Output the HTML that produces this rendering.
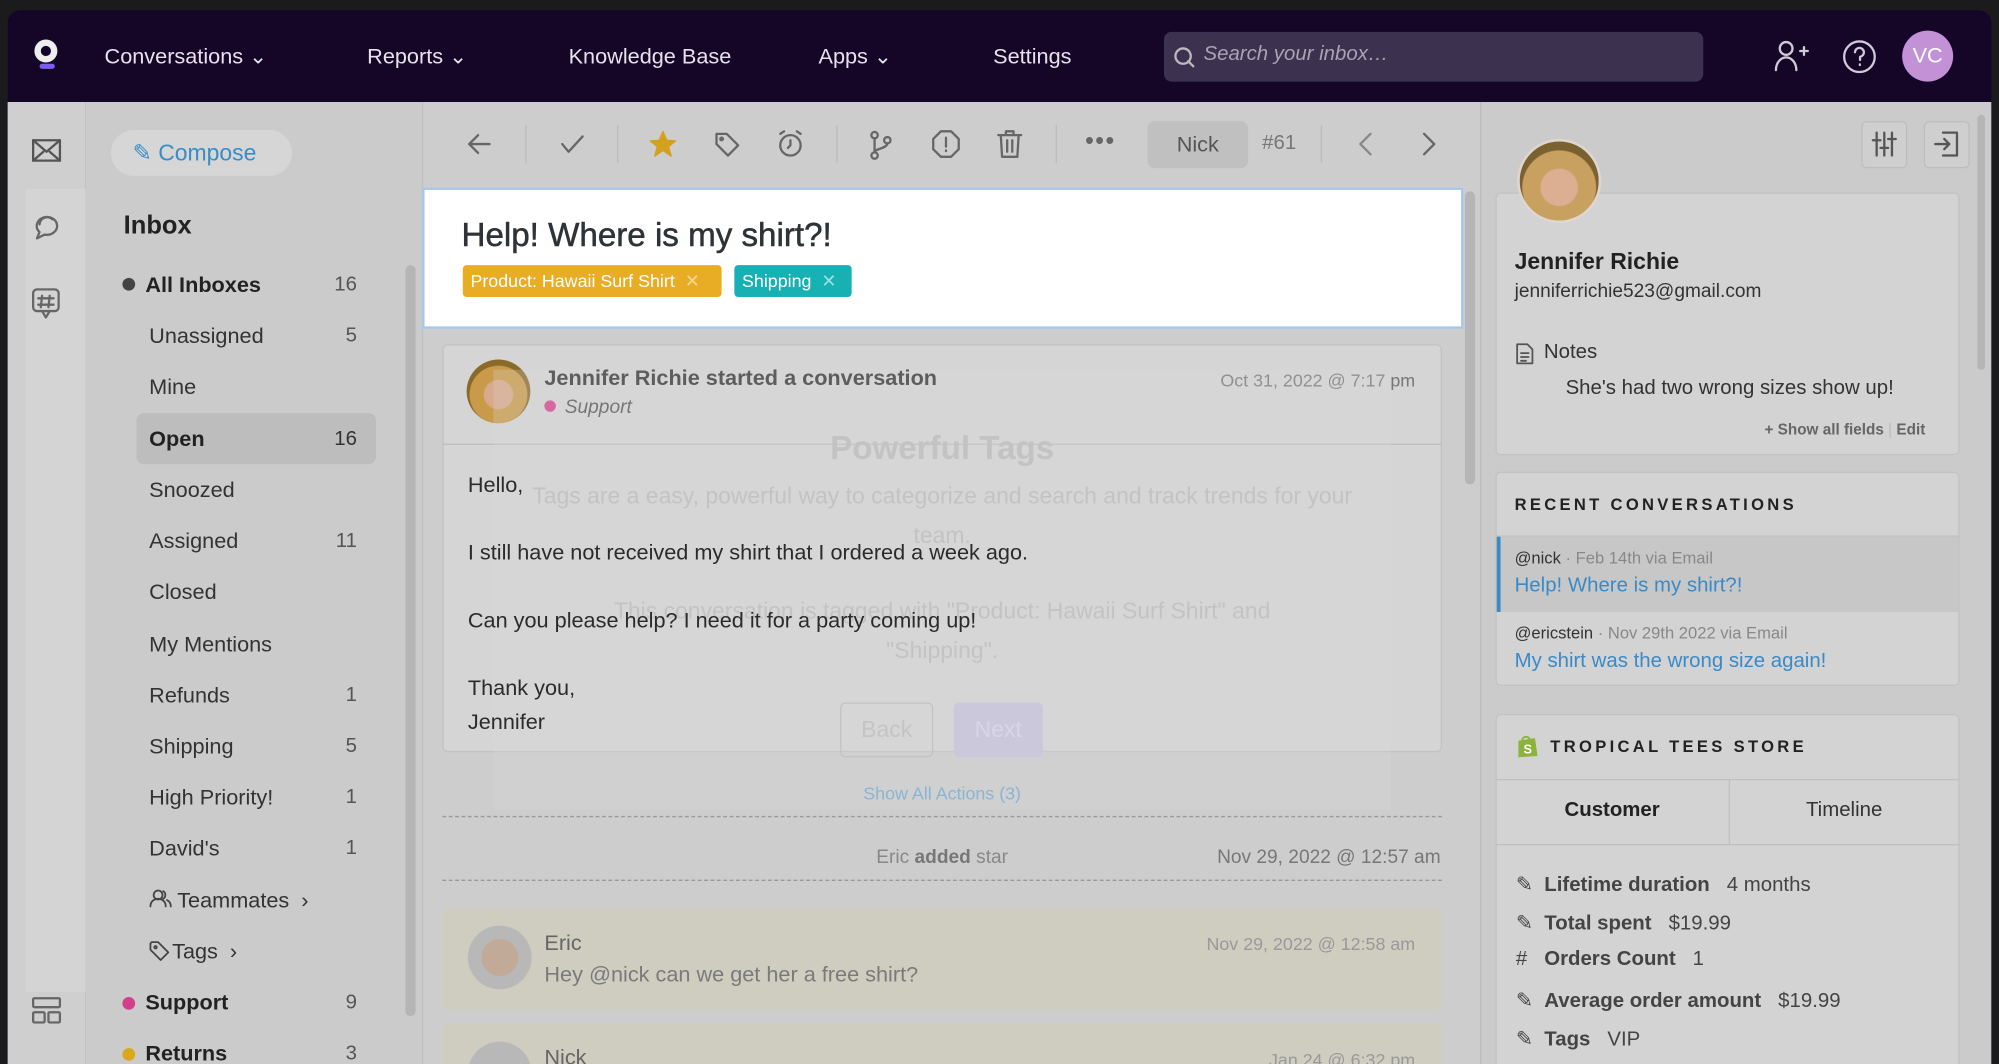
<!DOCTYPE html>
<html><head><meta charset="utf-8"><style>
*{box-sizing:border-box;margin:0;padding:0}
html,body{width:1999px;height:1064px;overflow:hidden;background:#1b1b1d;font-family:"Liberation Sans",sans-serif}
#w{position:absolute;left:0;top:0;width:1999px;height:1064px;overflow:hidden}
#s{position:absolute;left:0;top:0;width:1568px;height:835px;overflow:hidden;transform:scale(1.2749);transform-origin:0 0;background:#1b1b1d}
.a{position:absolute;white-space:nowrap}
svg.i{position:absolute;fill:none;stroke:#666;stroke-width:1.8;stroke-linecap:round;stroke-linejoin:round}
.nav{color:#e6e2ec;font-size:17px;top:35px}
.sb{font-size:17px;color:#333}
.cnt{font-size:16px;color:#555;text-align:right;width:40px;left:240px}
.card{position:absolute;background:#d3d3d3;border:1px solid #c2c2c2;border-radius:4px}
.ghost{color:#c3c3c3;text-align:center}
.rl{font-size:16px;color:#444}
</style></head><body><div id="w"><div id="s">
<!-- nav -->
<div class="a" style="left:6px;top:8px;width:1556px;height:72px;background:#150628;border-radius:10px 10px 0 0"></div>
<div class="a" style="left:27px;top:31px;width:18px;height:18px;border:5px solid #eee;border-radius:50%"></div>
<div class="a" style="left:31px;top:50px;width:12px;height:4px;background:#7b5cf0;border-radius:2px"></div>
<div class="a nav" style="left:82px">Conversations ⌄</div>
<div class="a nav" style="left:288px">Reports ⌄</div>
<div class="a nav" style="left:446px">Knowledge Base</div>
<div class="a nav" style="left:642px">Apps ⌄</div>
<div class="a nav" style="left:779px">Settings</div>
<div class="a" style="left:913px;top:25px;width:423px;height:39px;background:#3d3150;border-radius:6px"></div>
<svg class="i" style="left:920px;top:36px;stroke:#bbb" width="18" height="18"><circle cx="8" cy="8" r="6"/><path d="M12 12l4 4"/></svg>
<div class="a" style="left:944px;top:34px;font-size:16px;font-style:italic;color:#a9a3b3">Search your inbox…</div>
<svg class="i" style="left:1390px;top:30px;stroke:#cfcad8" width="30" height="28"><circle cx="11" cy="8" r="5"/><path d="M3 25c0-6 4-10 8-10s8 4 8 10M22 10h6M25 7v6"/></svg>
<svg class="i" style="left:1444px;top:30px;stroke:#cfcad8" width="29" height="29"><circle cx="14.5" cy="14.5" r="12"/><path d="M11 11a3.5 3.5 0 1 1 4 3.5v2.5M14.8 20.5v.5"/></svg>
<div class="a" style="left:1492px;top:24px;width:40px;height:40px;border-radius:50%;background:#c291d6;color:#fff;font-size:17px;text-align:center;line-height:40px">VC</div>
<!-- columns -->
<div class="a" style="left:6px;top:80px;width:61px;height:755px;background:#cfcfcf"></div>
<div class="a" style="left:20px;top:148px;width:47px;height:630px;background:#d4d4d4"></div>
<div class="a" style="left:67px;top:80px;width:264px;height:755px;background:#cbcbcb"></div>
<div class="a" style="left:331px;top:80px;width:830px;height:755px;background:#cdcdcd;border-left:1px solid #c0c0c0"></div>
<div class="a" style="left:1161px;top:80px;width:401px;height:755px;background:#cbcbcb;border-left:1px solid #c0c0c0"></div>
<div class="a" style="left:1562px;top:80px;width:6px;height:755px;background:#1b1b1d"></div>
<!-- left icons -->
<svg class="i" style="left:25px;top:108px;stroke:#555" width="24" height="20"><rect x="1" y="2" width="21" height="16"/><path d="M1 2l10.5 9L22 2M1 18l8-7M22 18l-8-7"/></svg>
<svg class="i" style="left:24px;top:166px" width="24" height="24"><path d="M7 16a8 7 0 1 1 4 2l-6 3 2-5z"/><path d="M7 10a6 6 0 0 1 10-4"/></svg>
<svg class="i" style="left:25px;top:226px" width="22" height="26"><rect x="1" y="1" width="20" height="17" rx="3"/><path d="M8 18l3 5 3-5M8 6l-1 9M14 6l-1 9M5 8h12M5 13h12"/></svg>
<svg class="i" style="left:25px;top:782px" width="23" height="21"><rect x="1" y="1" width="21" height="7" rx="1"/><rect x="1" y="12" width="9" height="8" rx="1"/><rect x="13" y="12" width="9" height="8" rx="1"/></svg>
<!-- sidebar -->
<div class="a" style="left:87px;top:102px;width:142px;height:36px;background:#d6d6d6;border-radius:18px"></div>
<div class="a" style="left:104px;top:110px;font-size:18px;color:#3a8dc4">✎ Compose</div>
<div class="a" style="left:97px;top:166px;font-size:20px;font-weight:bold;color:#222">Inbox</div>
<div class="a" style="left:107px;top:324px;width:188px;height:40px;background:#bdbdbd;border-radius:6px"></div>
<div class="a" style="left:96px;top:218px;width:10px;height:10px;border-radius:50%;background:#444"></div>
<div class="a sb" style="left:114px;top:214px;font-weight:bold;color:#222">All Inboxes</div><div class="a cnt" style="top:215px">16</div>
<div class="a sb" style="left:117px;top:254px">Unassigned</div><div class="a cnt" style="top:255px">5</div>
<div class="a sb" style="left:117px;top:294px">Mine</div>
<div class="a sb" style="left:117px;top:335px;font-weight:bold;color:#222">Open</div><div class="a cnt" style="top:336px;color:#333">16</div>
<div class="a sb" style="left:117px;top:375px">Snoozed</div>
<div class="a sb" style="left:117px;top:415px">Assigned</div><div class="a cnt" style="top:416px">11</div>
<div class="a sb" style="left:117px;top:455px">Closed</div>
<div class="a sb" style="left:117px;top:496px">My Mentions</div>
<div class="a sb" style="left:117px;top:536px">Refunds</div><div class="a cnt" style="top:537px">1</div>
<div class="a sb" style="left:117px;top:576px">Shipping</div><div class="a cnt" style="top:577px">5</div>
<div class="a sb" style="left:117px;top:616px">High Priority!</div><div class="a cnt" style="top:617px">1</div>
<div class="a sb" style="left:117px;top:656px">David's</div><div class="a cnt" style="top:657px">1</div>
<svg class="i" style="left:117px;top:697px;stroke:#444;stroke-width:1.4" width="18" height="16"><circle cx="7" cy="5" r="3.5"/><path d="M1 14c0-4 3-6 6-6s6 2 6 6M11 2a3.5 3.5 0 0 1 0 6M14 9c2 1 3 3 3 5"/></svg>
<div class="a sb" style="left:139px;top:697px">Teammates &nbsp;›</div>
<svg class="i" style="left:117px;top:738px;stroke:#444;stroke-width:1.4" width="16" height="16"><path d="M1 2v5l8 8 6-6-8-8H2z"/><circle cx="5" cy="5" r="1"/></svg>
<div class="a sb" style="left:135px;top:737px">Tags &nbsp;›</div>
<div class="a" style="left:96px;top:782px;width:10px;height:10px;border-radius:50%;background:#d33f8a"></div>
<div class="a sb" style="left:114px;top:777px;font-weight:bold;color:#222">Support</div><div class="a cnt" style="top:778px">9</div>
<div class="a" style="left:96px;top:822px;width:10px;height:10px;border-radius:50%;background:#d9a81c"></div>
<div class="a sb" style="left:114px;top:817px;font-weight:bold;color:#222">Returns</div><div class="a cnt" style="top:818px">3</div>
<div class="a" style="left:318px;top:208px;width:8px;height:589px;background:#b5b5b5;border-radius:4px"></div>
<!-- toolbar -->
<svg class="i" style="left:366px;top:103px" width="20" height="20"><path d="M18 10H2M9 3l-7 7 7 7"/></svg>
<div class="a" style="left:412px;top:98px;width:1px;height:30px;background:#bbb"></div>
<svg class="i" style="left:439px;top:104px" width="20" height="18"><path d="M2 9l5 6L18 3"/></svg>
<div class="a" style="left:484px;top:98px;width:1px;height:30px;background:#bbb"></div>
<svg class="i" style="left:509px;top:102px;fill:#d2a21e;stroke:#d2a21e;stroke-width:1" width="22" height="22"><path d="M11 1l3 7 7 .5-5.5 4.5 2 7.5L11 16l-6.5 4.5 2-7.5L1 8.5 8 8z"/></svg>
<svg class="i" style="left:560px;top:103px" width="21" height="21"><path d="M2 2h8l9 9-8 8-9-9z"/><circle cx="6" cy="6" r="1"/></svg>
<svg class="i" style="left:609px;top:101px" width="22" height="24"><circle cx="11" cy="13" r="8"/><path d="M11 9v4l-2 2M3 4l3-2M19 4l-3-2"/></svg>
<div class="a" style="left:656px;top:98px;width:1px;height:30px;background:#bbb"></div>
<svg class="i" style="left:682px;top:102px" width="18" height="24"><circle cx="4" cy="4" r="2.5"/><circle cx="4" cy="20" r="2.5"/><circle cx="14" cy="8" r="2.5"/><path d="M4 6.5v11M14 10.5c0 4-10 4-10 7"/></svg>
<svg class="i" style="left:731px;top:102px" width="22" height="22"><path d="M7 1h8l6 6v8l-6 6H7l-6-6V7z"/><path d="M11 6v7M11 16v.5"/></svg>
<svg class="i" style="left:782px;top:101px" width="20" height="24"><path d="M1 5h18M7 5V2h6v3M3 5l1 17h12l1-17M8 9v9M12 9v9"/></svg>
<div class="a" style="left:828px;top:98px;width:1px;height:30px;background:#bbb"></div>
<div class="a" style="left:851px;top:100px;font-size:20px;color:#666;letter-spacing:1px">•••</div>
<div class="a" style="left:900px;top:95px;width:79px;height:37px;background:#c0c0c0;border-radius:6px;text-align:center;line-height:37px;font-size:17px;color:#555">Nick</div>
<div class="a" style="left:990px;top:104px;font-size:16px;color:#777">#61</div>
<div class="a" style="left:1036px;top:98px;width:1px;height:30px;background:#bbb"></div>
<svg class="i" style="left:1064px;top:103px;stroke:#888" width="14" height="20"><path d="M11 2L3 10l8 8"/></svg>
<svg class="i" style="left:1114px;top:103px" width="14" height="20"><path d="M3 2l8 8-8 8"/></svg>
<!-- header card -->
<div class="a" style="left:331px;top:147px;width:817px;height:111px;background:#fff;border:2px solid #a9c6ea"></div>
<div class="a" style="left:362px;top:169px;font-size:26px;color:#2e3338;-webkit-text-stroke:0.4px #2e3338">Help! Where is my shirt?!</div>
<div class="a" style="left:363px;top:208px;width:203px;height:25px;background:#e8ad24;border-radius:3px;color:#fff;font-size:14px;line-height:25px;padding-left:6px">Product: Hawaii Surf Shirt <span style="color:#f6d88c">&nbsp;✕</span></div>
<div class="a" style="left:576px;top:208px;width:92px;height:25px;background:#17b0b3;border-radius:3px;color:#fff;font-size:14px;line-height:25px;padding-left:6px">Shipping <span style="color:#9de0e0">&nbsp;✕</span></div>
<div class="a" style="left:1149px;top:150px;width:8px;height:230px;background:#b5b5b5;border-radius:4px"></div>
<!-- message -->
<div class="card" style="left:347px;top:270px;width:784px;height:320px;background:#d5d5d5"></div>
<div class="a" style="left:347px;top:348px;width:784px;height:1px;background:#bdbdbd"></div>
<div class="a" style="left:366px;top:282px;width:50px;height:50px;border-radius:50%;background:radial-gradient(circle at 50% 55%,#d9a98b 0 30%,#c99a4a 32% 60%,#8a6a2a 62%)"></div>
<div class="a" style="left:427px;top:287px;font-size:17px;font-weight:bold;color:#333">Jennifer Richie started a conversation</div>
<div class="a" style="left:427px;top:314px;width:9px;height:9px;border-radius:50%;background:#d6418c"></div>
<div class="a" style="left:443px;top:311px;font-size:15px;font-style:italic;color:#555">Support</div>
<div class="a" style="left:900px;top:290px;width:210px;text-align:right;font-size:14px;color:#777">Oct 31, 2022 @ 7:17 pm</div>
<div class="a" style="left:387px;top:290px;width:704px;height:345px;background:rgba(220,220,220,.25)"></div>
<div class="a ghost" style="left:387px;top:336px;width:704px;font-size:26px;font-weight:bold">Powerful Tags</div>
<div class="a ghost" style="left:387px;top:374px;width:704px;font-size:18px;line-height:31px;white-space:normal;padding:0 20px">Tags are a easy, powerful way to categorize and search and track trends for your team.</div>
<div class="a ghost" style="left:387px;top:464px;width:704px;font-size:18px;line-height:31px;white-space:normal;padding:0 50px">This conversation is tagged with "Product: Hawaii Surf Shirt" and "Shipping".</div>
<div class="a" style="left:659px;top:551px;width:73px;height:43px;border:1px solid #c2c2c2;border-radius:4px;color:#c4c4c4;font-size:18px;text-align:center;line-height:41px">Back</div>
<div class="a" style="left:748px;top:551px;width:70px;height:43px;background:#cbc8dc;border-radius:4px;color:#d8d6e6;font-size:18px;text-align:center;line-height:43px">Next</div>
<div class="a" style="left:367px;top:368px;font-size:17px;color:#2b2b2b;line-height:26.5px">Hello,<br><br>I still have not received my shirt that I ordered a week ago.<br><br>Can you please help? I need it for a party coming up!<br><br>Thank you,<br>Jennifer</div>
<div class="a" style="left:347px;top:614px;width:784px;text-align:center;font-size:14px;color:#8ab4d4">Show All Actions (3)</div>
<div class="a" style="left:347px;top:640px;width:784px;border-top:1px dashed #999"></div>
<div class="a" style="left:347px;top:664px;width:784px;text-align:center;font-size:15px;color:#888">Eric <b style="color:#777">added</b> star</div>
<div class="a" style="left:900px;top:664px;width:230px;text-align:right;font-size:15px;color:#777">Nov 29, 2022 @ 12:57 am</div>
<div class="a" style="left:347px;top:690px;width:784px;border-top:1px dashed #999"></div>
<div class="a" style="left:347px;top:712px;width:784px;height:80px;background:#cfcdc0;border-radius:4px"></div>
<div class="a" style="left:367px;top:726px;width:50px;height:50px;border-radius:50%;background:radial-gradient(circle at 50% 50%,#c2aa98 0 40%,#b8b8b8 42%)"></div>
<div class="a" style="left:427px;top:730px;font-size:17px;color:#666">Eric</div>
<div class="a" style="left:427px;top:755px;font-size:17px;color:#7a7a7a">Hey @nick can we get her a free shirt?</div>
<div class="a" style="left:900px;top:732px;width:210px;text-align:right;font-size:14px;color:#999">Nov 29, 2022 @ 12:58 am</div>
<div class="a" style="left:347px;top:803px;width:784px;height:40px;background:#cfcdc0;border-radius:4px"></div>
<div class="a" style="left:367px;top:817px;width:50px;height:50px;border-radius:50%;background:#b8b8b8"></div>
<div class="a" style="left:427px;top:820px;font-size:17px;color:#666">Nick</div>
<div class="a" style="left:900px;top:823px;width:210px;text-align:right;font-size:14px;color:#999">Jan 24 @ 6:32 pm</div>
<!-- right panel -->
<div class="a" style="left:1460px;top:95px;width:36px;height:37px;border:1px solid #bdbdbd;border-radius:4px;background:#cfcfcf"></div>
<svg class="i" style="left:1467px;top:102px;stroke:#555" width="22" height="22"><path d="M5 2v18M11 2v18M17 2v18M2 8h6M8 14h6M14 7h6"/></svg>
<div class="a" style="left:1509px;top:95px;width:36px;height:37px;border:1px solid #bdbdbd;border-radius:4px;background:#cfcfcf"></div>
<svg class="i" style="left:1516px;top:102px;stroke:#555" width="22" height="22"><path d="M8 2h11v18H8M2 11h11M9 7l4 4-4 4"/></svg>
<div class="card" style="left:1173px;top:151px;width:364px;height:206px"></div>
<div class="a" style="left:1190px;top:109px;width:66px;height:66px;border-radius:50%;border:2px solid #e0d6cf;background:radial-gradient(circle at 50% 58%,#dcae92 0 30%,#c8a060 32% 60%,#7a6230 62%)"></div>
<div class="a" style="left:1188px;top:195px;font-size:18px;font-weight:bold;color:#222">Jennifer Richie</div>
<div class="a" style="left:1188px;top:220px;font-size:15px;color:#333">jenniferrichie523@gmail.com</div>
<svg class="i" style="left:1189px;top:269px;stroke:#555;stroke-width:1.4" width="14" height="17"><path d="M1 1h8l4 4v11H1zM4 8h6M4 11h6M4 14h4"/></svg>
<div class="a" style="left:1211px;top:268px;font-size:16px;color:#333">Notes</div>
<div class="a" style="left:1228px;top:296px;font-size:16px;color:#333">She's had two wrong sizes show up!</div>
<div class="a" style="left:1384px;top:330px;font-size:12px;color:#666;font-weight:bold">+ Show all fields <span style="color:#bbb;font-weight:normal">|</span> Edit</div>
<div class="card" style="left:1173px;top:370px;width:364px;height:168px"></div>
<div class="a" style="left:1188px;top:388px;font-size:13px;font-weight:bold;letter-spacing:2.6px;color:#222">RECENT CONVERSATIONS</div>
<div class="a" style="left:1173px;top:420px;width:364px;height:1px;background:#c0c0c0"></div>
<div class="a" style="left:1174px;top:421px;width:362px;height:59px;background:#c7c7c7;border-left:3px solid #3a8ac8"></div>
<div class="a" style="left:1188px;top:430px;font-size:13px;color:#333">@nick <span style="color:#888">· Feb 14th via Email</span></div>
<div class="a" style="left:1188px;top:451px;font-size:16px;color:#3a8ac8">Help! Where is my shirt?!</div>
<div class="a" style="left:1188px;top:489px;font-size:13px;color:#333">@ericstein <span style="color:#888">· Nov 29th 2022 via Email</span></div>
<div class="a" style="left:1188px;top:510px;font-size:16px;color:#3a8ac8">My shirt was the wrong size again!</div>
<div class="card" style="left:1173px;top:560px;width:364px;height:290px"></div>
<svg class="a" style="left:1188px;top:575px" width="20" height="20"><path d="M3 6l13-2 2 14-15 1z" fill="#8bb43c"/><path d="M6 6c0-4 6-4 6 0" stroke="#8bb43c" fill="none" stroke-width="1.5"/><text x="7" y="16" font-size="10" fill="#fff" font-family="Liberation Sans" font-weight="bold">S</text></svg>
<div class="a" style="left:1216px;top:578px;font-size:13px;font-weight:bold;letter-spacing:2.6px;color:#222">TROPICAL TEES STORE</div>
<div class="a" style="left:1173px;top:611px;width:364px;height:1px;background:#c0c0c0"></div>
<div class="a" style="left:1356px;top:611px;width:1px;height:51px;background:#c0c0c0"></div>
<div class="a" style="left:1173px;top:662px;width:364px;height:1px;background:#c0c0c0"></div>
<div class="a" style="left:1173px;top:627px;width:183px;text-align:center;font-size:16px;font-weight:bold;color:#222">Customer</div>
<div class="a" style="left:1356px;top:627px;width:181px;text-align:center;font-size:16px;color:#333">Timeline</div>
<div class="a rl" style="left:1189px;top:684px">✎ &nbsp;<b>Lifetime duration</b> &nbsp; 4 months</div>
<div class="a rl" style="left:1189px;top:714px">✎ &nbsp;<b>Total spent</b> &nbsp; $19.99</div>
<div class="a rl" style="left:1189px;top:744px"># &nbsp;&nbsp;<b>Orders Count</b> &nbsp; 1</div>
<div class="a rl" style="left:1189px;top:775px">✎ &nbsp;<b>Average order amount</b> &nbsp; $19.99</div>
<div class="a rl" style="left:1189px;top:805px">✎ &nbsp;<b>Tags</b> &nbsp; VIP</div>
<div class="a" style="left:1551px;top:90px;width:6px;height:200px;background:#b5b5b5;border-radius:3px"></div>
</div></div></body></html>
